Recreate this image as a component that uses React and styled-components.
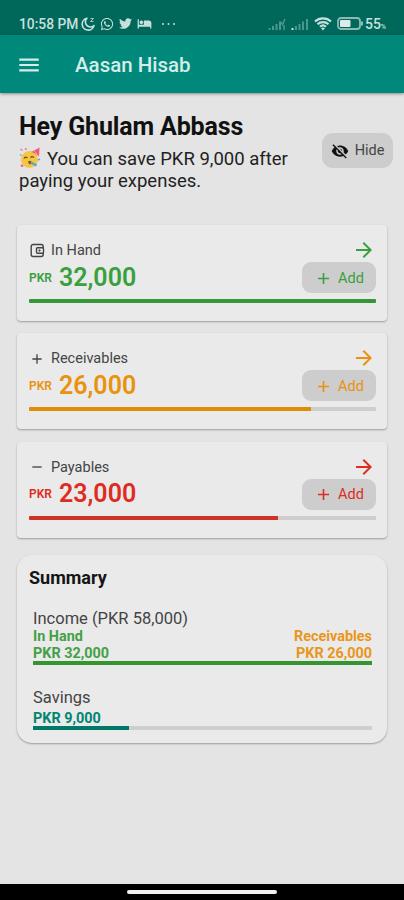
import React from "react";

import styled, { createGlobalStyle } from "styled-components";
import { FaTwitter, FaWhatsapp } from "react-icons/fa";
import { MdAdd, MdArrowForward, MdHotel, MdMenu, MdRemove, MdVisibilityOff } from "react-icons/md";

const GlobalStyle = createGlobalStyle`
  * {
    box-sizing: border-box;
  }

  body {
    margin: 0;
    background-color: #e4e4e4;
    font-family: Roboto, "Liberation Sans", sans-serif;
    color: #222;
  }

  svg {
    display: block;
    flex-shrink: 0;
  }
`;

const Screen = styled.div`
  display: flex;
  flex-direction: column;
  width: 404px;
  height: 900px;
  overflow: hidden;
`;

const StatusBar = styled.div`
  display: flex;
  justify-content: space-between;
  align-items: center;
  height: 35px;
  padding: 12px 18px 0 19px;
  background-color: #00675b;
  color: #c8e0dc;
`;

const StatusGroup = styled.div`
  display: flex;
  align-items: center;
  gap: 5px;
`;

const Clock = styled.span`
  width: 60px;
  margin-right: -3px;
  font-size: 13.8px;
  font-weight: 500;
  white-space: nowrap;
`;

const Battery = styled.span`
  display: flex;
  align-items: baseline;
  margin-left: -4px;
  font-size: 14px;
  font-weight: 500;

  small {
    font-size: 7px;
  }
`;

const AppBar = styled.header`
  display: flex;
  align-items: center;
  flex-shrink: 0;
  height: 58px;
  padding: 1px 0 0 16px;
  gap: 33px;
  background-color: #00897b;
  color: #d5ece8;
  box-shadow: 0 1px 3px rgba(0, 0, 0, 0.4);
`;

const AppTitle = styled.h1`
  margin: 0;
  padding-top: 1px;
  font-size: 20.5px;
  font-weight: 500;
`;

const Content = styled.main`
  flex: 1;
  padding: 17px 17px 0 17px;
`;

const Greeting = styled.section`
  display: flex;
  justify-content: space-between;
  align-items: flex-start;
  height: 115px;
  padding-left: 2px;
  margin-right: -6px;
`;

const Hello = styled.h2`
  margin: 0;
  font-size: 25px;
  line-height: 33px;
  font-weight: 700;
  letter-spacing: -0.15px;
  color: #111;
  white-space: nowrap;
`;

const Message = styled.p`
  width: 280px;
  margin: 4px 0 0;
  font-size: 18.5px;
  line-height: 22px;
  color: #222;
  white-space: nowrap;

  svg {
    display: inline-block;
    vertical-align: -4px;
    margin-right: 6px;
  }
`;

const SoftButton = styled.button`
  display: flex;
  align-items: center;
  justify-content: center;
  border: 0;
  padding: 0;
  font-family: inherit;
  font-size: 14.5px;
  background-color: #cdcdcd;
  color: ${props => props.$color};
`;

const HideButton = styled(SoftButton)`
  width: 71px;
  height: 35px;
  margin-top: 23px;
  gap: 6px;
  border-radius: 11px;
`;

const AddButton = styled(SoftButton)`
  width: 74px;
  height: 31px;
  gap: 5px;
  padding-top: 1px;
  border-radius: 9px;
`;

const Card = styled.section`
  height: 96px;
  margin-bottom: 12.3px;
  padding: 13px 11px 0 12px;
  border-radius: 4px;
  background-color: #eaeaea;
  box-shadow: 0 1px 2px rgba(0, 0, 0, 0.32);
`;

const CardRow = styled.div`
  display: flex;
  justify-content: space-between;
  height: ${props => props.$height}px;
`;

const CardLabel = styled.div`
  display: flex;
  align-items: center;
  gap: 6px;
  padding-top: 1px;
  font-size: 14.5px;
  color: #444;

  svg {
    width: 16px;
    height: 16px;
  }
`;

const Amount = styled.div`
  display: flex;
  align-items: center;
  gap: 7px;
  height: 30px;
  font-size: 25px;
  font-weight: 600;
  color: ${props => props.$color};

  small {
    padding-top: 1px;
    font-size: 12px;
  }
`;

const Track = styled.div`
  height: 4px;
  border-radius: ${props => props.$radius || 0}px;
  background-color: #cecece;
  overflow: hidden;
`;

const Fill = styled.div`
  height: 100%;
  background-color: ${props => props.$color};
`;

const Summary = styled.section`
  height: 188px;
  margin-top: 17.5px;
  padding: 11px 15px 0 16px;
  border-radius: 15px;
  background-color: #eaeaea;
  box-shadow: 0 1px 2px rgba(0, 0, 0, 0.32);
`;

const SummaryTitle = styled.h3`
  margin: 0 0 18px -4px;
  font-size: 18px;
  line-height: 24px;
  font-weight: 700;
  color: #151515;
`;

const SummaryLabel = styled.div`
  padding-top: ${props => props.$top || 0}px;
  font-size: 16.5px;
  line-height: 20px;
  color: #444;
`;

const Split = styled.div`
  display: flex;
  justify-content: space-between;
  height: 31.5px;
`;

const Figure = styled.div`
  font-size: 14.4px;
  line-height: 16.4px;
  font-weight: 700;
  text-align: ${props => props.$align || "left"};
  color: ${props => props.$color};
`;

const Savings = styled.div`
  margin-top: 23px;

  ${Figure} {
    height: 18.5px;
    padding-top: 3px;
  }
`;

const NavBar = styled.div`
  display: flex;
  justify-content: center;
  flex-shrink: 0;
  height: 16px;
  padding-top: 6px;
  background-color: #000;
`;

const NavHandle = styled.div`
  width: 150px;
  height: 4px;
  border-radius: 2px;
  background-color: #f2f2f2;
`;

const MoonIcon = () => (
  <svg width="14" height="14" viewBox="0 0 14 14" fill="none" stroke="currentColor" strokeWidth="1.6">
    <path d="M6 1.2A6 6 0 1 0 13 8.6A5 5 0 0 1 6 1.2Z" strokeLinejoin="round" />
    <path d="M9.500 1.500h3L9.500 4.500h3" strokeWidth=".8" />
  </svg>
);

const WalletIcon = () => (
  <svg viewBox="0 0 16 16" fill="none" stroke="currentColor" strokeWidth="1.4">
    <rect x="2.200" y="1.500" width="12" height="12" rx="2" />
    <rect x="7.500" y="4.700" width="7" height="5.600" rx="1" fill="#eaeaea" />
    <circle cx="10.500" cy="7.500" r=".8" fill="currentColor" strokeWidth=".6" />
  </svg>
);

const SignalIcon = ({ crossed }) => (
  <svg width="18" height="12" viewBox="0 0 18 12" stroke="#4d968c" strokeWidth="2">
    <path d="M1.5 12V10" stroke={crossed ? "#4d968c" : "#c8e0dc"} />
    <path d="M5 12V8M8.5 12V6M12 12V3.5" />
    {crossed ? <path d="M12.500 4l2 2.500L17 1M16 12V7" strokeWidth="1.5" fill="none" /> : <path d="M16 12V1" />}
  </svg>
);

const WifiIcon = () => (
  <svg width="18" height="14" viewBox="0 0 18 14" fill="none" stroke="currentColor" strokeWidth="2.2">
    <path d="M1 4.5C5.5 .3 12.500 .3 17 4.500" />
    <path d="M3.500 7.200C6.600 4.300 11.400 4.300 14.500 7.200" />
    <path d="M6 9.700C7.700 8.200 10.300 8.200 12 9.700" />
    <path d="M7 11.200Q9 9.800 11 11.200L9 13.500Z" fill="currentColor" stroke="none" />
  </svg>
);

const BatteryIcon = () => (
  <svg width="27" height="13" viewBox="0 0 27 13">
    <rect x="1" y="1" width="22" height="11" rx="3" fill="none" stroke="#8bbab3" strokeWidth="1.8" />
    <rect x="3" y="3" width="10.500" height="7" rx="1" fill="#dcebe8" />
    <path d="M25 4.500v4" stroke="#8bbab3" strokeWidth="2" />
  </svg>
);

const PartyIcon = () => (
  <svg width="22" height="22" viewBox="0 0 22 22" role="img" aria-label="🥳">
    <circle cx="10.500" cy="12.500" r="8.500" fill="#f6c544" />
    <path d="M12.500 5L20.500 .5L20 9.500Q17 6 12.500 5Z" fill="#ee5a75" />
    <path d="M15 3.600L18.500 7.500" stroke="#f49bb0" strokeWidth="1" />
    <path d="M5 11.500Q6.500 9 8.300 11M11.500 10.500Q13.300 8.500 15 10.700" fill="none" stroke="#6b4b26" strokeWidth="1.300" />
    <path d="M9 14.200Q11 13 12.500 14.400Q12.500 17 10.500 17.500Q9 16 9 14.200Z" fill="#8b562d" />
    <path d="M12 15.500L17.500 18.500" stroke="#51a9c9" strokeWidth="2" />
    <path d="M1.500 2l2 1.500M7 1l-.5 2" stroke="#e976a1" strokeWidth="1.500" />
    <path d="M1 7.500l1.500 1M19 13l2-1" stroke="#55a9d9" strokeWidth="1.500" />
    <path d="M2 18l2 1.500" stroke="#d95c98" strokeWidth="2" />
  </svg>
);

const accounts = [
  { label: "In Hand", amount: "32,000", color: "#38a03c", bar: "#38963a", filled: 100, Icon: WalletIcon },
  { label: "Receivables", amount: "26,000", color: "#e9920e", bar: "#e38b08", filled: 81.3, Icon: MdAdd },
  { label: "Payables", amount: "23,000", color: "#de2c22", bar: "#d03228", filled: 71.8, Icon: MdRemove }
];

const Account = ({ label, amount, color, bar, filled, Icon }) => (
  <Card>
    <CardRow $height={24}>
      <CardLabel>
        <Icon />
        {label}
      </CardLabel>
      <MdArrowForward size={24} color={color} />
    </CardRow>
    <CardRow $height={37}>
      <Amount $color={color}>
        <small>PKR</small>
        {amount}
      </Amount>
      <AddButton $color={color}>
        <MdAdd size={19} />
        Add
      </AddButton>
    </CardRow>
    <Track $radius={1}>
      <Fill $color={bar} style={{ width: `${filled}%` }} />
    </Track>
  </Card>
);

const App = () => (
  <Screen>
    <GlobalStyle />
    <StatusBar>
      <StatusGroup>
        <Clock>10:58 PM</Clock>
        <MoonIcon />
        <FaWhatsapp size={14} />
        <FaTwitter size={13} />
        <MdHotel size={15} />
        <svg width="24" height="4" viewBox="0 0 24 4" fill="currentColor">
          <circle cx="6" cy="2" r="1" />
          <circle cx="11.500" cy="2" r="1" />
          <circle cx="17" cy="2" r="1" />
        </svg>
      </StatusGroup>
      <StatusGroup>
        <SignalIcon crossed />
        <SignalIcon />
        <WifiIcon />
        <BatteryIcon />
        <Battery>
          55<small>%</small>
        </Battery>
      </StatusGroup>
    </StatusBar>
    <AppBar>
      <MdMenu size={26} />
      <AppTitle>Aasan Hisab</AppTitle>
    </AppBar>
    <Content>
      <Greeting>
        <div>
          <Hello>Hey Ghulam Abbass</Hello>
          <Message>
            <PartyIcon />
            You can save PKR 9,000 after
            <br />
            paying your expenses.
          </Message>
        </div>
        <HideButton $color="#444">
          <MdVisibilityOff size={18} color="#111" />
          Hide
        </HideButton>
      </Greeting>
      {accounts.map(account => (
        <Account key={account.label} {...account} />
      ))}
      <Summary>
        <SummaryTitle>Summary</SummaryTitle>
        <SummaryLabel $top={1}>Income (PKR 58,000)</SummaryLabel>
        <Split>
          <Figure $color="#43a047">
            In Hand
            <br />
            PKR 32,000
          </Figure>
          <Figure $color="#e9961a" $align="right">
            Receivables
            <br />
            PKR 26,000
          </Figure>
        </Split>
        <Track>
          <Fill $color="#35962f" style={{ width: "100%" }} />
        </Track>
        <Savings>
          <SummaryLabel>Savings</SummaryLabel>
          <Figure $color="#008573">PKR 9,000</Figure>
          <Track>
            <Fill $color="#00796b" style={{ width: "28.2%" }} />
          </Track>
        </Savings>
      </Summary>
    </Content>
    <NavBar>
      <NavHandle />
    </NavBar>
  </Screen>
);

export default App;
